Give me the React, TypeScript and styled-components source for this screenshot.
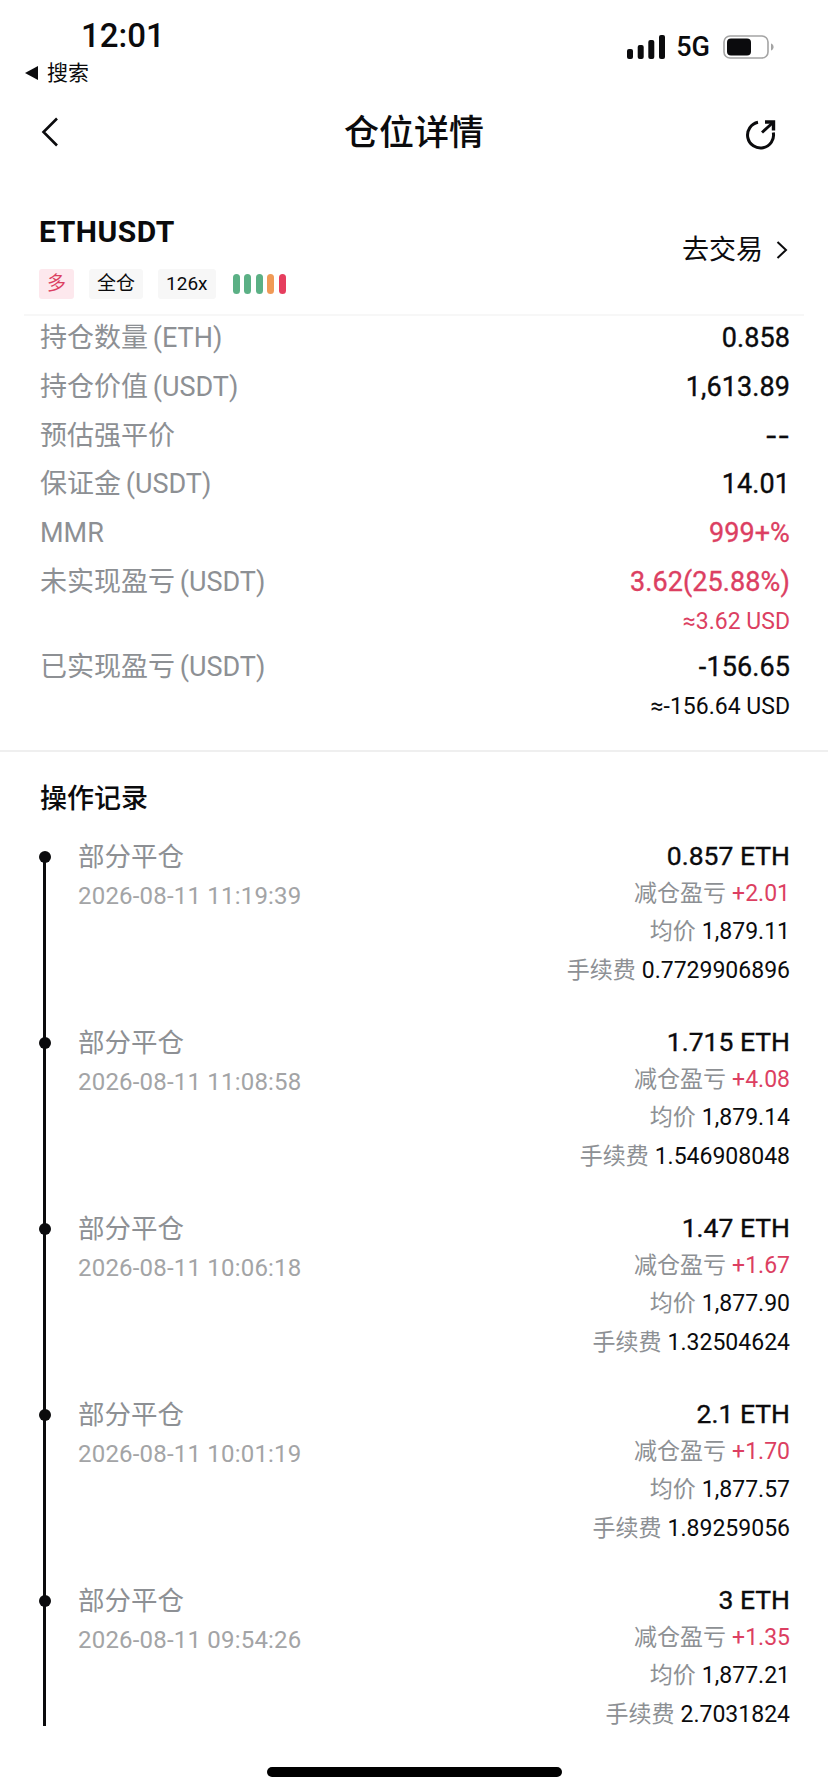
import React from 'react';
import styled, { createGlobalStyle } from 'styled-components';

const GlobalStyle = createGlobalStyle`
  html, body {
    margin: 0;
    padding: 0;
    background: #fff;
  }
  body {
    font-family: Roboto, "Noto Sans CJK SC", sans-serif;
    color: #0b0b0d;
  }
`;

const RED = '#dc3f62';
const GRAY = '#8d9094';

interface IRow {
  label: string;
  value: string;
  sub?: string;
  red?: boolean;
  dash?: boolean;
}

interface IRecord {
  amount: string;
  time: string;
  pnl: string;
  price: string;
  fee: string;
}

const rows: IRow[] = [
  { label: '持仓数量 (ETH)', value: '0.858' },
  { label: '持仓价值 (USDT)', value: '1,613.89' },
  { label: '预估强平价', value: '--', dash: true },
  { label: '保证金 (USDT)', value: '14.01' },
  { label: 'MMR', value: '999+%', red: true },
  { label: '未实现盈亏 (USDT)', value: '3.62(25.88%)', sub: '≈3.62 USD', red: true },
  { label: '已实现盈亏 (USDT)', value: '-156.65', sub: '≈-156.64 USD' },
];

const records: IRecord[] = [
  { amount: '0.857 ETH', time: '2026-08-11 11:19:39', pnl: '+2.01', price: '1,879.11', fee: '0.7729906896' },
  { amount: '1.715 ETH', time: '2026-08-11 11:08:58', pnl: '+4.08', price: '1,879.14', fee: '1.546908048' },
  { amount: '1.47 ETH', time: '2026-08-11 10:06:18', pnl: '+1.67', price: '1,877.90', fee: '1.32504624' },
  { amount: '2.1 ETH', time: '2026-08-11 10:01:19', pnl: '+1.70', price: '1,877.57', fee: '1.89259056' },
  { amount: '3 ETH', time: '2026-08-11 09:54:26', pnl: '+1.35', price: '1,877.21', fee: '2.7031824' },
];

const candles = ['#5bb085', '#5bb085', '#5bb085', '#f09a56', '#e63e5e'];

const App = () => {
  return (
    <>
      <GlobalStyle />
      <Page>
        <StatusBar>
          <StatusLeft>
            <Clock>12:01</Clock>
            <BackApp>
              <svg width="13" height="14" viewBox="0 0 13 14">
                <path d="M13 0v14L0 7z" fill="#0b0b0d" />
              </svg>
              搜索
            </BackApp>
          </StatusLeft>
          <StatusRight>
            <svg width="38" height="24" viewBox="0 0 38 24">
              <rect x="0" y="14" width="6" height="10" rx="2" fill="#0b0b0d" />
              <rect x="10.700" y="10" width="6" height="14" rx="2" fill="#0b0b0d" />
              <rect x="21.300" y="5" width="6" height="19" rx="2" fill="#0b0b0d" />
              <rect x="32" y="0" width="6" height="24" rx="2" fill="#0b0b0d" />
            </svg>
            <Network>5G</Network>
            <svg width="52" height="24" viewBox="0 0 52 24">
              <rect x="1" y="1" width="44" height="22" rx="6" fill="none" stroke="#a4a4a4" strokeWidth="1.600" />
              <rect x="4" y="3.500" width="24" height="17" rx="4" fill="#0b0b0d" />
              <path d="M48 8.500c1.800.6 2.600 2 2.600 3.500S49.800 14.900 48 15.500z" fill="#a4a4a4" />
            </svg>
          </StatusRight>
        </StatusBar>

        <NavBar>
          <NavBack>
            <svg width="18" height="30" viewBox="0 0 18 30" fill="none">
              <path d="M16 1.500 2.500 15 16 28.500" stroke="#0b0b0d" strokeWidth="2.600" />
            </svg>
          </NavBack>
          <NavTitle>仓位详情</NavTitle>
          <NavAction>
            <svg width="32" height="32" viewBox="0 0 32 32" fill="none" stroke="#0b0b0d" strokeWidth="3">
              <path d="M14 3.300A13 13 0 1 0 29.300 13.500" />
              <path d="M18 13.500 29 3.500" />
              <path d="M21 3H29.500V11.500" strokeWidth="3.400" />
            </svg>
          </NavAction>
        </NavBar>

        <SymbolHeader>
          <div>
            <SymbolName>ETHUSDT</SymbolName>
            <TagRow>
              <Tag $long>多</Tag>
              <Tag>全仓</Tag>
              <Tag>126x</Tag>
              <Candles>
                {candles.map((color, index) => (
                  <Candle key={index} $color={color} />
                ))}
              </Candles>
            </TagRow>
          </div>
          <TradeLink>
            去交易
            <svg width="12" height="20" viewBox="0 0 12 20" fill="none">
              <path d="M1.500 2 10 10l-8.500 8" stroke="#0b0b0d" strokeWidth="2" />
            </svg>
          </TradeLink>
        </SymbolHeader>

        <InfoList>
          {rows.map((row) => (
            <InfoRow key={row.label}>
              <InfoLabel>{row.label}</InfoLabel>
              <InfoValues>
                <InfoValue $red={row.red} $dash={row.dash}>{row.value}</InfoValue>
                {row.sub && <InfoSub $red={row.red}>{row.sub}</InfoSub>}
              </InfoValues>
            </InfoRow>
          ))}
        </InfoList>

        <RecordSection>
          <SectionTitle>操作记录</SectionTitle>
          <Timeline>
            {records.map((record) => (
              <RecordItem key={record.time}>
                <Dot />
                <div>
                  <RecordTitle>部分平仓</RecordTitle>
                  <RecordTime>{record.time}</RecordTime>
                </div>
                <RecordDetail>
                  <RecordAmount>{record.amount}</RecordAmount>
                  <DetailLine>
                    <DetailLabel>减仓盈亏</DetailLabel>
                    <Profit>{record.pnl}</Profit>
                  </DetailLine>
                  <DetailLine>
                    <DetailLabel>均价</DetailLabel>
                    {record.price}
                  </DetailLine>
                  <DetailLine>
                    <DetailLabel>手续费</DetailLabel>
                    {record.fee}
                  </DetailLine>
                </RecordDetail>
              </RecordItem>
            ))}
          </Timeline>
        </RecordSection>

        <HomeIndicator />
      </Page>
    </>
  );
};

const Page = styled.div`
  position: relative;
  width: 828px;
  height: 1792px;
  overflow: hidden;
  background: #fff;
`;

const StatusBar = styled.div`
  display: flex;
  justify-content: space-between;
  height: 100px;
  padding: 18px 53px 0 25px;
  box-sizing: border-box;
`;

const StatusLeft = styled.div`
  display: flex;
  flex-direction: column;
`;

const Clock = styled.div`
  margin-left: 56px;
  font-size: 33px;
  line-height: 36px;
  font-weight: 500;
`;

const BackApp = styled.div`
  display: flex;
  align-items: center;
  gap: 9px;
  margin-top: 5px;
  font-size: 21px;
  line-height: 28px;
`;

const StatusRight = styled.div`
  display: flex;
  align-items: center;
  gap: 11px;
  height: 24px;
  margin-top: 17px;
`;

const Network = styled.span`
  margin-right: 2px;
  font-size: 27px;
  font-weight: 500;
  line-height: 24px;
`;

const NavBar = styled.div`
  display: grid;
  grid-template-columns: 1fr auto 1fr;
  align-items: center;
  height: 64px;
  padding: 0 52px;
`;

const NavBack = styled.div`
  display: flex;
  margin-left: -11px;
`;

const NavTitle = styled.h1`
  margin: 0;
  padding-top: 4px;
  font-size: 35px;
  font-weight: 500;
  line-height: 60px;
`;

const NavAction = styled.div`
  display: flex;
  justify-content: flex-end;
  padding-top: 6px;
`;

const SymbolHeader = styled.div`
  display: flex;
  justify-content: space-between;
  align-items: flex-start;
  height: 152px;
  margin: 0 24px;
  padding: 48px 16px 0 15px;
  border-bottom: 2px solid #f7f7f7;
  box-sizing: border-box;
`;

const SymbolName = styled.div`
  font-size: 30px;
  line-height: 40px;
  font-weight: 700;
  letter-spacing: 0.5px;
`;

const TagRow = styled.div`
  display: flex;
  align-items: center;
  gap: 15px;
  margin-top: 17px;
`;

const Tag = styled.span<{ $long?: boolean }>`
  padding: 0 8px;
  height: 30px;
  border-radius: 3px;
  font-size: 19px;
  line-height: 30px;
  background: ${({ $long }) => ($long ? '#fde8ed' : '#f7f7f7')};
  color: ${({ $long }) => ($long ? RED : '#0b0b0d')};
`;

const Candles = styled.div`
  display: flex;
  gap: 4.500px;
  margin-left: 2px;
`;

const Candle = styled.span<{ $color: string }>`
  width: 7px;
  height: 20px;
  border-radius: 3.500px;
  background: ${({ $color }) => $color};
`;

const TradeLink = styled.div`
  display: flex;
  align-items: center;
  gap: 13px;
  margin-top: 21px;
  font-size: 27px;
  line-height: 34px;
`;

const InfoList = styled.div`
  display: flex;
  flex-direction: column;
  gap: 4.800px;
  padding: 0 38px 25px 40px;
  border-bottom: 2px solid #efefef;
`;

const InfoRow = styled.div`
  display: flex;
  justify-content: space-between;
  align-items: flex-start;
`;

const InfoLabel = styled.span`
  font-size: 27px;
  line-height: 44px;
  word-spacing: -2px;
  color: ${GRAY};
`;

const InfoValues = styled.div`
  display: flex;
  flex-direction: column;
  align-items: flex-end;
`;

const InfoValue = styled.span<{ $red?: boolean; $dash?: boolean }>`
  font-family: ${({ $dash }) => ($dash ? 'Inter, sans-serif' : 'inherit')};
  font-size: 27px;
  line-height: 44px;
  letter-spacing: 0.1px;
  -webkit-text-stroke: 0.35px currentColor;
  color: ${({ $red }) => ($red ? RED : '#0b0b0d')};
`;

const InfoSub = styled.span<{ $red?: boolean }>`
  font-size: 23px;
  line-height: 36px;
  color: ${({ $red }) => ($red ? RED : '#0b0b0d')};
`;

const RecordSection = styled.div`
  padding: 29px 38px 0 40px;
`;

const SectionTitle = styled.h2`
  margin: 0;
  font-size: 27px;
  line-height: 36px;
  font-weight: 500;
`;

const Timeline = styled.div`
  margin-top: 40px;
  margin-left: 3px;
  padding-left: 32px;
  border-left: 3px solid #0b0b0d;
`;

const RecordItem = styled.div`
  position: relative;
  display: flex;
  justify-content: space-between;
  height: 186px;
  &:last-child {
    height: 125px;
  }
`;

const Dot = styled.span`
  position: absolute;
  left: -39.500px;
  top: -6px;
  width: 12px;
  height: 12px;
  border-radius: 50%;
  background: #0b0b0d;
`;

const RecordTitle = styled.div`
  margin-top: -19px;
  font-size: 26.500px;
  line-height: 38px;
  color: ${GRAY};
`;

const RecordTime = styled.div`
  margin-top: 2px;
  font-size: 24px;
  line-height: 36px;
  letter-spacing: 0.2px;
  color: #a3a4a6;
`;

const RecordDetail = styled.div`
  display: flex;
  flex-direction: column;
  align-items: flex-end;
  margin-top: -20px;
`;

const RecordAmount = styled.div`
  font-size: 26.500px;
  line-height: 38px;
  -webkit-text-stroke: 0.35px currentColor;
`;

const DetailLine = styled.div`
  display: flex;
  align-items: center;
  gap: 6px;
  font-size: 23px;
  line-height: 38.500px;
`;

const DetailLabel = styled.span`
  color: ${GRAY};
`;

const Profit = styled.span`
  color: ${RED};
`;

const HomeIndicator = styled.div`
  position: absolute;
  left: 267px;
  top: 1767px;
  width: 295px;
  height: 10px;
  border-radius: 5px;
  background: #000;
`;

export default App;
